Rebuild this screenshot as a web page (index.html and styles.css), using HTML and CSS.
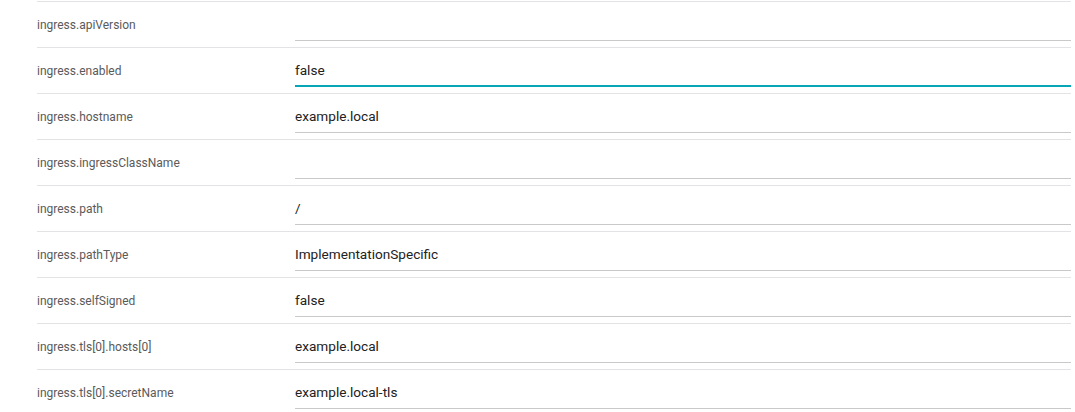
FILE: index.html
```html
<!DOCTYPE html>
<html>
<head>
<meta charset="utf-8">
<link rel="stylesheet" href="styles.css">
</head>
<body>
<div class="list">
  <div class="row"><div class="label">ingress.apiVersion</div><div class="field"><span class="value"></span></div></div>
  <div class="row"><div class="label">ingress.enabled</div><div class="field focused"><span class="value">false</span></div></div>
  <div class="row"><div class="label">ingress.hostname</div><div class="field"><span class="value">example.local</span></div></div>
  <div class="row"><div class="label">ingress.ingressClassName</div><div class="field"><span class="value"></span></div></div>
  <div class="row"><div class="label">ingress.path</div><div class="field"><span class="value">/</span></div></div>
  <div class="row"><div class="label">ingress.pathType</div><div class="field"><span class="value">ImplementationSpecific</span></div></div>
  <div class="row"><div class="label">ingress.selfSigned</div><div class="field"><span class="value">false</span></div></div>
  <div class="row"><div class="label">ingress.tls[0].hosts[0]</div><div class="field"><span class="value">example.local</span></div></div>
  <div class="row"><div class="label">ingress.tls[0].secretName</div><div class="field"><span class="value">example.local-tls</span></div></div>
</div>
</body>
</html>
```
FILE: styles.css
```css
html, body {
  margin: 0;
  padding: 0;
  background: #ffffff;
}
body {
  font-family: Roboto, "Liberation Sans", Arial, sans-serif;
}
.list {
  padding: 1px 4px 0 37px;
}
.row {
  display: flex;
  align-items: flex-start;
  height: 45px;
  border-top: 1px solid #e3e3e6;
}
.label {
  width: 258px;
  flex: none;
  font-size: 12px;
  color: #5a5a5a;
  line-height: 45px;
  height: 44px;
  padding-top: 1px;
}
.field {
  flex: 1;
  margin-top: 6px;
  height: 32px;
  border-bottom: 1px solid #c9c9c9;
  display: flex;
  align-items: center;
}
.field.focused {
  height: 31px;
  border-bottom: 2px solid #06a6b6;
}
.value {
  font-size: 13.6px;
  color: #222222;
}
```
